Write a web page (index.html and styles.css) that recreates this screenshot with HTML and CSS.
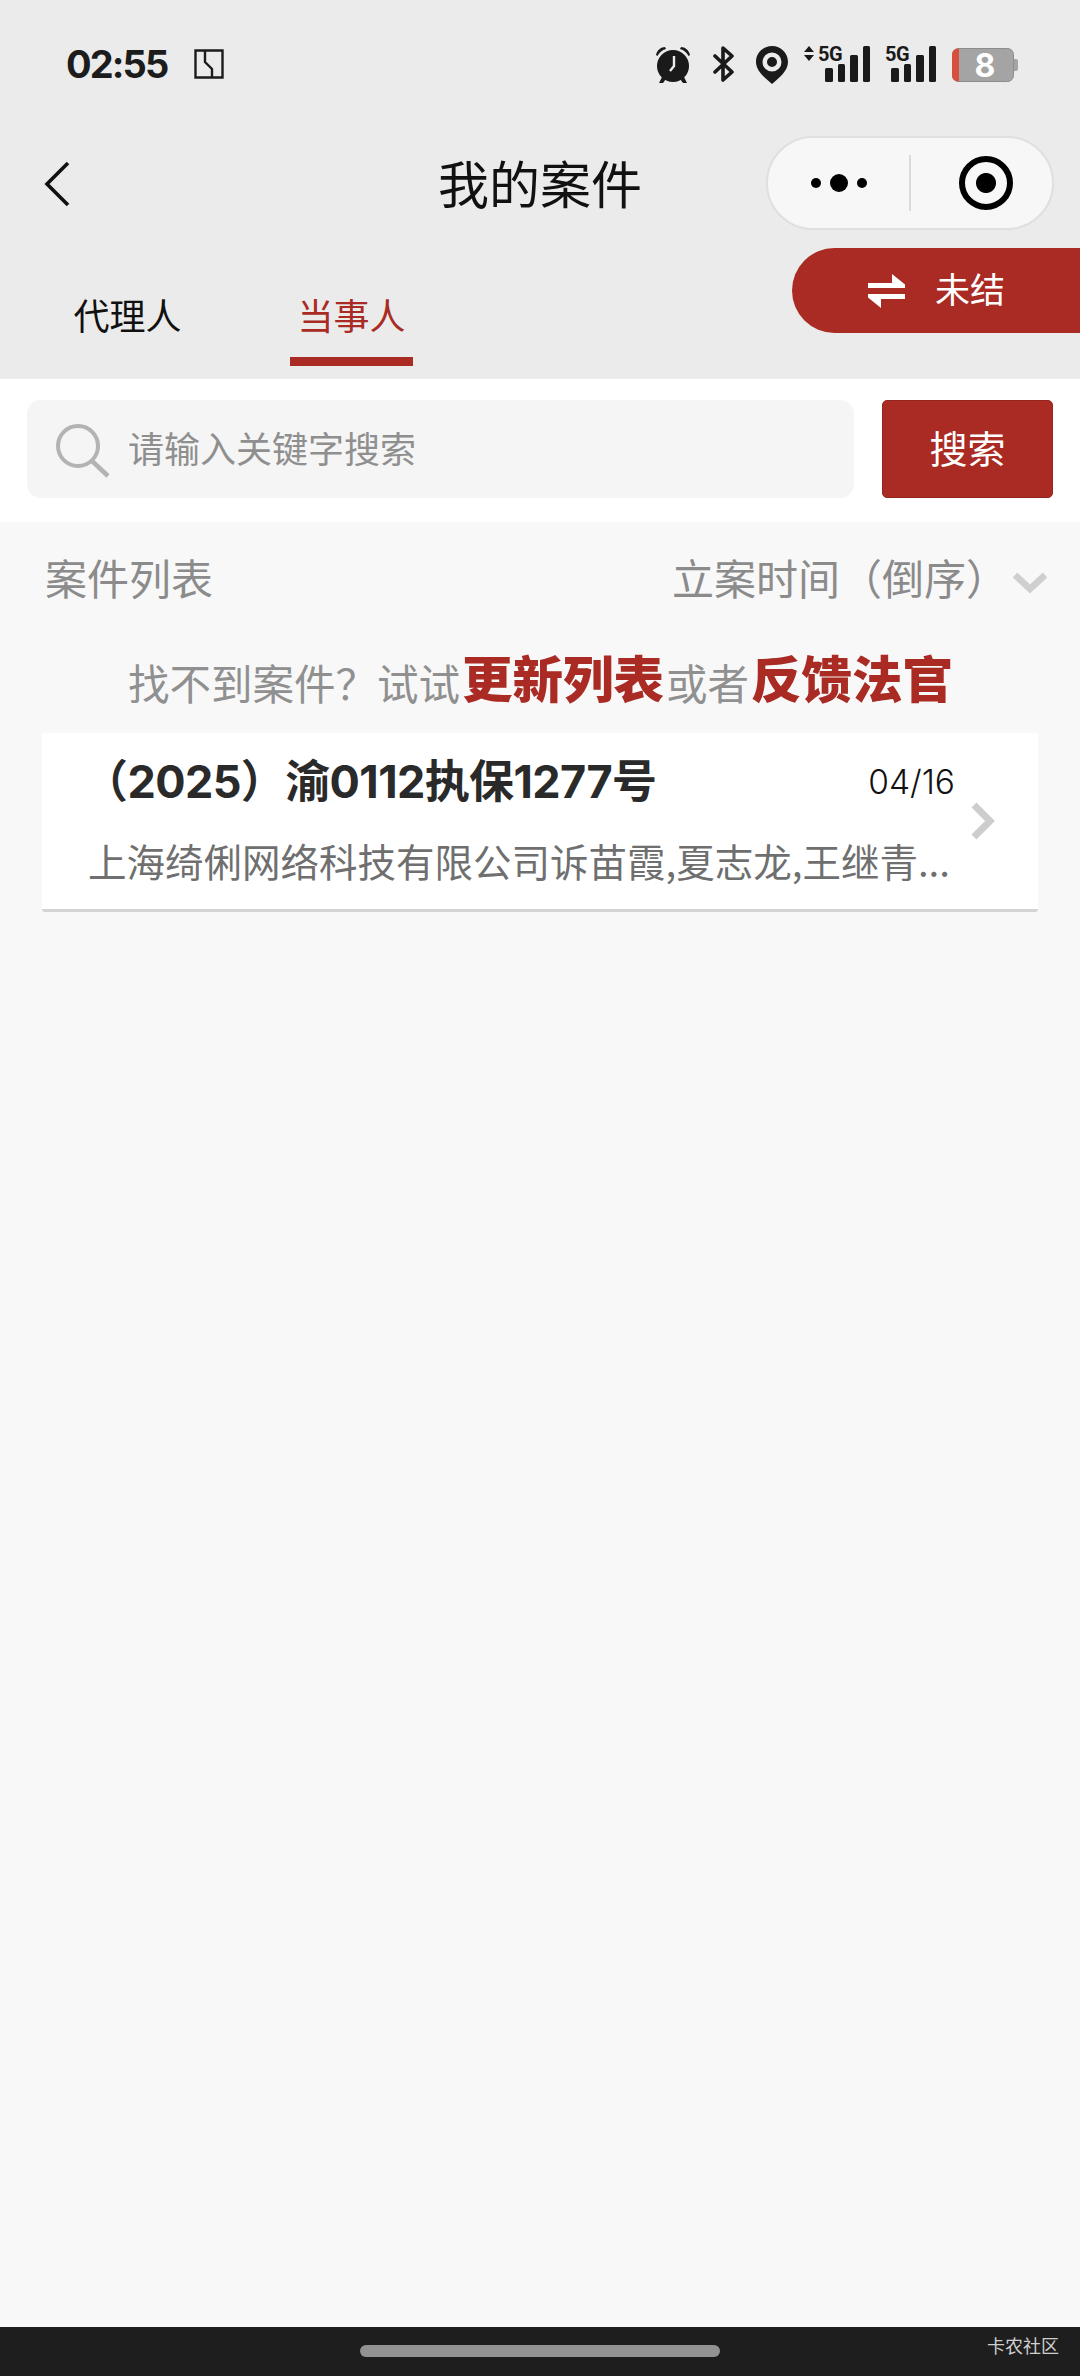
FILE: index.html
```html
<!DOCTYPE html>
<html lang="zh-CN">
<head>
<meta charset="utf-8">
<title>我的案件</title>
<link rel="stylesheet" href="styles.css">
</head>
<body>
<div class="page">
  <header class="head">
    <div class="status">
      <div class="status-left">
        <span class="time">02:55</span>
        <svg class="nfc" width="30" height="30" viewBox="0 0 30 30"><path d="M1.500 1.500h27v27h-27z M11 1.500V13L18 20V28.500" fill="none" stroke="#1c1c1c" stroke-width="2.400"/></svg>
      </div>
      <div class="status-right">
        <svg class="ic-alarm" width="38" height="39" viewBox="0 0 38 39"><circle cx="19" cy="21" r="16" fill="#1a1a1a"/><path d="M2 10C3 5 7 2 11 2L12 4C8 5 5 8 3.500 11Z M36 10C35 5 31 2 27 2L26 4C30 5 33 8 34.500 11Z M8 32L5 38H9L12 34Z M30 32L33 38H29L26 34Z" fill="#1a1a1a"/><path d="M20 11V21L16 26" fill="none" stroke="#ebebeb" stroke-width="2.400"/></svg>
        <svg class="ic-bt" width="22" height="36" viewBox="0 0 22 36"><path d="M2 10L19 26L10 34V2L19 10L2 26" fill="none" stroke="#1a1a1a" stroke-width="3.600" stroke-linejoin="round" stroke-linecap="round"/></svg>
        <svg class="ic-pin" width="32" height="38" viewBox="0 0 32 38"><path fill-rule="evenodd" d="M16 0C7 0 0 7 0 16C0 25 9 32 16 38C23 32 32 25 32 16C32 7 25 0 16 0ZM16 6.500A9.500 9.500 0 1 1 16 25.500A9.500 9.500 0 1 1 16 6.500ZM16 11A5 5 0 1 0 16 21A5 5 0 1 0 16 11Z" fill="#1a1a1a"/></svg>
        <svg class="ic-sig" width="67" height="49" viewBox="0 -10 67 49"><path d="M0 6L5 0L10 6Z M0 9L5 15L10 9Z" fill="#1a1a1a"/><text x="14" y="15" class="sig-text">5G</text><rect x="21" y="22" width="8" height="14" rx="1.500" fill="#1a1a1a"/><rect x="34" y="18" width="7" height="18" rx="1.500" fill="#1a1a1a"/><rect x="46" y="9" width="8" height="27" rx="1.500" fill="#1a1a1a"/><rect x="59" y="0" width="7" height="36" rx="1.500" fill="#1a1a1a"/></svg>
        <svg class="ic-sig2" width="52" height="49" viewBox="0 -10 52 49"><text x="0" y="15" class="sig-text">5G</text><rect x="6" y="22" width="8" height="14" rx="1.500" fill="#1a1a1a"/><rect x="19" y="18" width="7" height="18" rx="1.500" fill="#1a1a1a"/><rect x="31" y="9" width="8" height="27" rx="1.500" fill="#1a1a1a"/><rect x="44" y="0" width="7" height="36" rx="1.500" fill="#1a1a1a"/></svg>
        <svg class="ic-bat" width="66" height="51" viewBox="0 -8 66 51"><rect x="0.500" y="0.500" width="61" height="33" rx="6" fill="#a4a4a4" stroke="#8c8c8c"/><path d="M6 0.500H7V33.500H6A6 6 0 0 1 0 27.500V6.500A6 6 0 0 1 6 0.500Z" fill="#d94f3d"/><path d="M62 11H64A2 2 0 0 1 66 13V21A2 2 0 0 1 64 23H62Z" fill="#a4a4a4"/><text x="33" y="28.500" class="bat-text">8</text></svg>
      </div>
    </div>
    <nav class="nav">
      <div class="nav-left">
        <svg width="26" height="46" viewBox="0 0 26 46"><path d="M24 2L3 23L24 44" fill="none" stroke="#111" stroke-width="3.600"/></svg>
      </div>
      <h1 class="title">我的案件</h1>
      <div class="capsule">
        <div class="cap-part">
          <span class="dot"></span><span class="dot dot-big"></span><span class="dot"></span>
        </div>
        <span class="cap-line"></span>
        <div class="cap-part">
          <span class="target"></span>
        </div>
      </div>
    </nav>
    <div class="tabs">
      <div class="tab">代理人</div>
      <div class="tab tab-on">当事人</div>
    </div>
    <div class="switch">
      <svg width="37" height="36" viewBox="0 0 37 36"><path d="M0 10H24V1L37 11.500V15H0Z M37 21H0V24.500L13 35V26H37Z" fill="#fff"/></svg>
      <span class="switch-text">未结</span>
    </div>
  </header>

  <section class="search">
    <div class="input">
      <svg width="54" height="54" viewBox="0 0 54 54"><circle cx="22" cy="22" r="20" fill="none" stroke="#b3b3b3" stroke-width="4"/><path d="M36 37L52 52" stroke="#b3b3b3" stroke-width="4.500"/></svg>
      <span class="placeholder">请输入关键字搜索</span>
    </div>
    <div class="btn"><span class="btn-text">搜索</span></div>
  </section>

  <main class="main">
    <div class="list-head">
      <span>案件列表</span>
      <div class="sort">
        <span>立案时间（倒序）</span>
        <svg width="36" height="24" viewBox="0 0 36 24"><path d="M3 5L18 19L33 5" fill="none" stroke="#cfcfcf" stroke-width="6.500"/></svg>
      </div>
    </div>
    <p class="hint">找不到案件？试试<b>更新列表</b>或者<b>反馈法官</b></p>
    <article class="card">
      <div class="card-body">
        <div class="card-top">
          <h2 class="case-no">（2025）渝0112执保1277号</h2>
          <span class="date">04/16</span>
        </div>
        <p class="parties">上海绮俐网络科技有限公司诉苗霞,夏志龙,王继青...</p>
      </div>
      <svg class="card-arrow" width="26" height="38" viewBox="0 0 26 38"><path d="M4 3L20 19L4 35" fill="none" stroke="#cdcdcd" stroke-width="7"/></svg>
    </article>
  </main>

  <footer class="bar">
    <span class="handle"></span>
    <span class="mark">卡农社区</span>
  </footer>
</div>
</body>
</html>
```

FILE: styles.css
```css
* { box-sizing: border-box; }
html, body { margin: 0; padding: 0; }
body { font-family: "Noto Sans CJK SC", "Noto Sans", sans-serif; background: #f8f8f8; }
.page { width: 1080px; height: 2376px; display: flex; flex-direction: column; overflow: hidden; }

.head { position: relative; background: #ebebeb; height: 379px; flex: none; }
.status { height: 122px; display: flex; justify-content: space-between; padding: 45px 62px 0 66px; align-items: flex-start; }
.status-left { display: flex; align-items: center; gap: 27px; height: 38px; }
.time { font-family: Inter, "Liberation Sans", sans-serif; font-weight: 700; font-size: 38px; line-height: 38px; letter-spacing: -1.900px; color: #1c1c1c; }
.status-right { display: flex; align-items: flex-start; height: 38px; }
.ic-bt { margin-left: 21px; margin-top: 1px; }
.ic-pin { margin-left: 21px; margin-top: 1px; }
.ic-sig { margin-left: 16px; margin-top: -9px; }
.ic-sig2 { margin-left: 14px; margin-top: -9px; }
.ic-bat { margin-left: 15px; margin-top: -5px; }
.sig-text { font-family: Roboto, sans-serif; font-weight: 700; font-size: 20px; fill: #1a1a1a; letter-spacing: -0.500px; }
.bat-text { font-family: Inter, sans-serif; font-weight: 700; font-size: 32px; fill: #fff; text-anchor: middle; }

.nav { height: 124px; display: grid; grid-template-columns: 1fr auto 1fr; align-items: center; padding: 0 26px; }
.nav-left { display: flex; align-items: center; padding-left: 18px; }
.title { margin: -5px 0 0; font-weight: 400; font-size: 51px; line-height: 60px; color: #111; }
.capsule { justify-self: end; width: 288px; height: 94px; margin-top: -2px; border-radius: 47px; background: #f7f7f7; border: 2px solid #dfdfdf; display: flex; align-items: center; }
.cap-part { flex: 1 1 0; min-width: 0; display: flex; align-items: center; justify-content: center; gap: 9px; }
.cap-line { flex: none; width: 2px; height: 56px; background: #dcdcdc; }
.dot { width: 10px; height: 10px; border-radius: 50%; background: #000; }
.dot-big { width: 18px; height: 18px; }
.target { width: 54px; height: 54px; margin-left: 8px; border-radius: 50%; border: 6px solid #000; background: radial-gradient(circle, #000 0 9.500px, transparent 10.500px); }

.tabs { display: flex; gap: 101px; padding: 0 0 0 66px; align-items: flex-end; height: 120px; }
.tab { width: 123px; height: 78px; text-align: center; font-size: 36px; line-height: 52px; color: #111; border-bottom: 9px solid transparent; }
.tab-on { color: #a92b24; border-bottom-color: #a92b24; }

.switch { position: absolute; right: 0; top: 248px; width: 288px; height: 85px; background: #a92b24; border-radius: 42.500px 0 0 42.500px; display: flex; align-items: center; gap: 30px; padding-left: 76px; color: #fff; font-size: 35px; }
.switch-text { margin-top: -6px; }

.search { height: 143px; flex: none; background: #fff; display: flex; gap: 28px; padding: 21px 27px 24px; }
.input { width: 827px; background: #f5f5f5; border-radius: 14px; display: flex; align-items: center; gap: 18px; padding-left: 29px; }
.input svg { margin-top: 4px; }
.placeholder { font-size: 36px; line-height: 48px; margin-top: -5px; color: #8f8f8f; }
.btn { width: 171px; background: #a92b24; border: 1px solid #95251f; border-radius: 5px; display: flex; align-items: center; justify-content: center; color: #fff; font-size: 38px; }
.btn-text { margin-top: -5px; }

.main { flex: 1; display: flex; flex-direction: column; padding: 0 42px; }
.list-head { display: flex; justify-content: space-between; align-items: center; height: 110px; margin: 0 -10px 0 3px; color: #8b8b8b; font-size: 42px; line-height: 56px; }
.sort { display: flex; align-items: center; gap: 4px; }
.sort svg { margin-top: 10px; }
.hint { margin: 0; height: 101px; display: flex; align-items: center; justify-content: center; padding: 0 0 2px 3px; font-size: 41.500px; color: #909090; white-space: nowrap; }
.hint b { font-size: 50.500px; font-weight: 900; color: #a92b24; margin: 0 2px; position: relative; top: -6px; }
.card { height: 179px; background: #fff; border-radius: 3px; border-bottom: 3px solid #d4d4d4; display: flex; align-items: center; padding: 0 42px 0 44px; }
.card-body { width: 870px; }
.card-top { display: flex; justify-content: space-between; align-items: center; height: 70px; margin-bottom: 11px; }
.case-no { margin: 0 0 0 -3px; font-size: 45px; font-weight: 700; line-height: 60px; color: #2a2a2a; font-family: Inter, "Noto Sans CJK SC", sans-serif; white-space: nowrap; letter-spacing: -0.600px; }
.date { font-family: Inter, sans-serif; font-size: 33.500px; font-weight: 300; color: #111; }
.parties { margin: 0 0 3px 2px; font-size: 38.500px; line-height: 64px; color: #6f6f6f; white-space: nowrap; }
.card-arrow { margin-left: 15px; }

.bar { position: relative; height: 49px; flex: none; background: #1e1e1e; display: flex; align-items: center; justify-content: center; }
.handle { width: 360px; height: 12px; border-radius: 6px; background: #929292; margin-top: -2px; }
.mark { position: absolute; right: 21px; top: 5px; font-size: 18px; color: #cfcfcf; }
```
